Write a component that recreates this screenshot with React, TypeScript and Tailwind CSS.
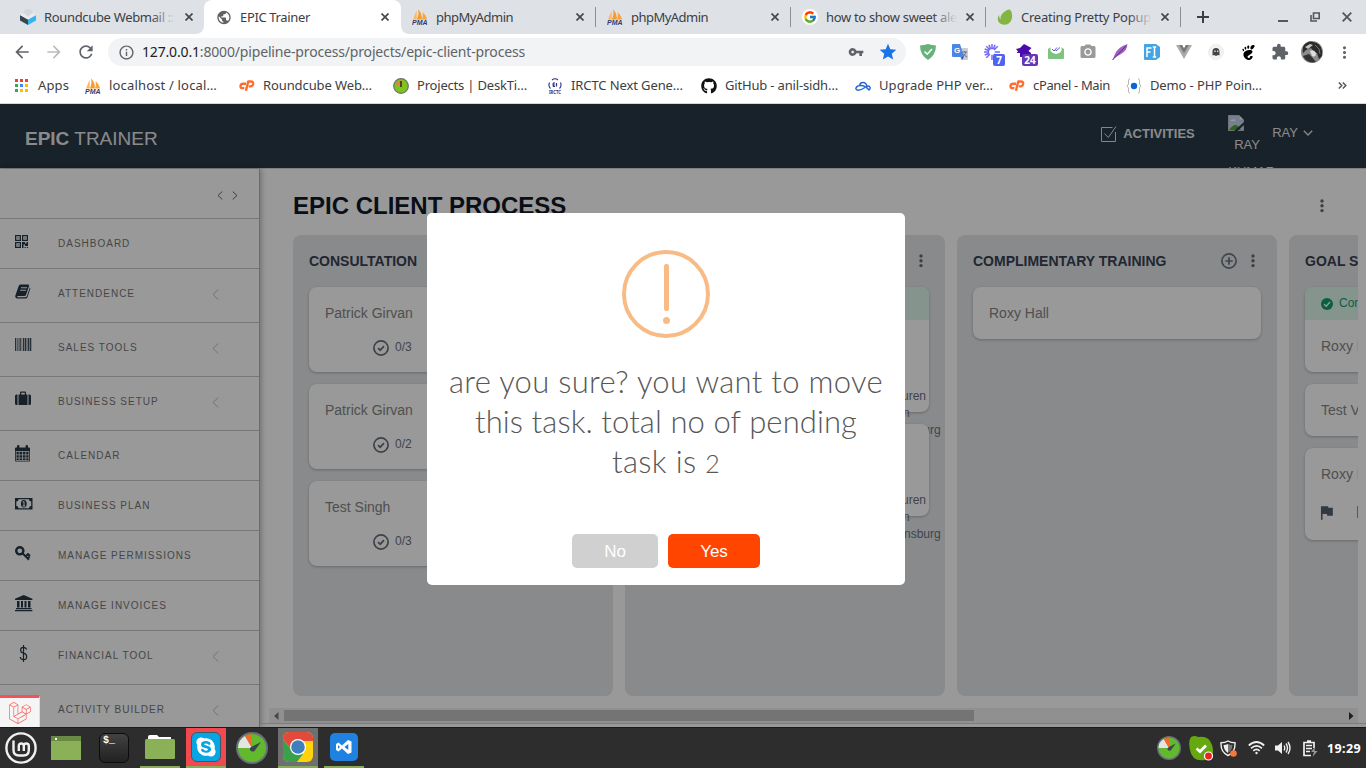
import { useLayoutEffect, useRef, type ReactNode } from 'react';
import { FaGithub, FaLaravel, FaSkype } from 'react-icons/fa';
import { FcGoogle } from 'react-icons/fc';
import { SiGnome } from 'react-icons/si';
import {
  MdArrowBack, MdArrowForward, MdRefresh, MdInfoOutline, MdVpnKey, MdStar, MdMoreVert,
  MdExtension, MdPublic, MdPhotoCamera, MdFlag,
} from 'react-icons/md';

/* Single line of text whose tracking is tuned so that it fills the given width. */
function Fit({ w, className = '', children }: { w: number; className?: string; children: ReactNode }) {
  const ref = useRef<HTMLSpanElement>(null);
  useLayoutEffect(() => {
    const el = ref.current;
    if (!el) return;
    el.style.letterSpacing = '0px';
    const n = (el.textContent || '').length;
    const natural = el.getBoundingClientRect().width;
    el.style.letterSpacing = `${(w - natural) / n}px`;
  }, [w]);
  return <span ref={ref} className={`inline-block shrink-0 whitespace-pre ${className}`}>{children}</span>;
}

function PmaIcon() {
  return (
    <svg width="16" height="16" viewBox="0 0 16 16">
      <path d="M1 10.500 L4.600 1.500 L4.800 10.500Z" fill="#fbb867" />
      <path d="M4.800 10.500 C6.500 7 7 4 6 .3 C9 3 10 7 9.800 10.500Z" fill="#f79b2c" />
      <path d="M10 10.500 C11 7 11 5 10.500 3 C13 5 14.500 8 15 10.500Z" fill="#f8a53c" />
      <text x="0" y="15.800" textLength="15.500" lengthAdjust="spacingAndGlyphs" fontSize="7" fontWeight="700" fontStyle="italic" fontFamily="Liberation Sans, sans-serif" fill="#333a75">PMA</text>
    </svg>
  );
}

function CpanelIcon() {
  return (
    <svg width="18" height="13" viewBox="0 0 18 13" fill="none" stroke="#ff6c2c" strokeWidth="2.700" strokeLinejoin="round">
      <path d="M8 4.500H4.600Q2.200 4.500 1.700 7Q1.500 9.500 4 9.500H6" />
      <path d="M7.800 12.500L10.400 2H13.400Q16.200 2 15.900 4.700Q15.400 7.500 12.800 7.500H11" />
    </svg>
  );
}

function RoundcubeIcon() {
  return (
    <svg width="16" height="16" viewBox="0 0 16 16">
      <circle cx="8" cy="5" r="5" fill="#d5d8da" />
      <path d="M0 6 L8 10.5 V16 L0 11.5Z" fill="#37474f" />
      <path d="M16 6 L8 10.5 V16 L16 11.5Z" fill="#34b5f0" />
      <path d="M0 6 L4 4 L8 8 L12 4 L16 6 L8 10.5Z" fill="#e9ebec" />
    </svg>
  );
}

function LeafIcon() {
  return (
    <svg width="16" height="16" viewBox="0 0 16 16">
      <path d="M12.500 .4C14.500 1 16 6 14.600 10.500 13 15 8 17 4 15 0 13 .2 8.500 2.200 6 C2 9 3 10 3.600 10.300 C2.500 5.500 9 .5 12.500 .4Z" fill="#82b541" />
    </svg>
  );
}

function Close() {
  return (
    <svg width="8" height="8" viewBox="0 0 8 8" stroke="#45494d" strokeWidth="1.700">
      <path d="M.5 .5 L7.500 7.500 M7.500 .5 L.5 7.500" />
    </svg>
  );
}

function TabBody({ icon, title, w, fade, fadeTo }: { icon: ReactNode; title: string; w: number; fade?: boolean; fadeTo?: string }) {
  return (
    <>
      <span className="flex w-4 shrink-0 justify-center">{icon}</span>
      <span className="relative ml-2 w-[131px] overflow-hidden text-[13px] leading-[18px] text-[#3c4043]">
        <Fit w={w}>{title}</Fit>
        {fade && <span className={`absolute inset-y-0 right-0 w-6 bg-gradient-to-r from-transparent ${fadeTo}`} />}
      </span>
      <span className="ml-auto"><Close /></span>
    </>
  );
}

function BrowserTabs() {
  const rest = [
    { icon: <PmaIcon />, title: 'phpMyAdmin', w: 77, fade: false },
    { icon: <PmaIcon />, title: 'phpMyAdmin', w: 77, fade: false },
    { icon: <span className="rounded-full bg-white p-[1px]"><FcGoogle size={14} /></span>, title: 'how to show sweet ale', w: 131, fade: true },
    { icon: <LeafIcon />, title: 'Creating Pretty Popup', w: 130, fade: true },
  ];
  return (
    <div className="flex h-[34px] shrink-0 bg-[#dee1e6]">
      <div className="w-[204px] bg-white">
        <div className="flex h-full items-center rounded-br-lg bg-[#dee1e6] pr-[11px] pl-5">
          <TabBody icon={<RoundcubeIcon />} title="Roundcube Webmail ::" w={130} fade fadeTo="to-[#dee1e6]" />
        </div>
      </div>
      <div className="flex w-[197px] items-center rounded-t-lg bg-white pr-3 pl-3">
        <TabBody icon={<MdPublic size={17} color="#5f6368" />} title="EPIC Trainer" w={70} />
      </div>
      {rest.map((t, i) => (
        <div key={i} className={`w-[195px] ${i === 0 ? 'bg-white' : ''}`}>
          <div className={`flex h-full items-center bg-[#dee1e6] pl-[11px] ${i === 0 ? 'rounded-bl-lg' : ''}`}>
            <div className="flex h-5 grow items-center border-r border-[#8b8f94] pr-[11px]">
              <TabBody {...t} fadeTo="to-[#dee1e6]" />
            </div>
          </div>
        </div>
      ))}
      <div className="flex grow items-center pl-[16px]">
        <svg width="12" height="12" stroke="#3c4043" strokeWidth="2"><path d="M6 0V12M0 6H12" /></svg>
        <div className="ml-auto flex items-center gap-[22px] pr-[14px]">
          <svg width="10" height="10" stroke="#55595d" strokeWidth="2"><path d="M0 9H10" /></svg>
          <svg width="10" height="10" fill="none" stroke="#55595d" strokeWidth="1.600"><path d="M3.500 1H9.200V6.500H3.500ZM1 3V9H7" /></svg>
          <svg width="10" height="10" stroke="#55595d" strokeWidth="1.900"><path d="M.7 .7L9.300 9.300M9.300 .7L.7 9.300" /></svg>
        </div>
      </div>
    </div>
  );
}

function Extensions() {
  const cells: ReactNode[] = [
    <svg key="a" width="16" height="16" viewBox="0 0 16 16"><path d="M0 1.500Q4 1.300 8 0Q12 1.300 16 1.500Q16 11 8 16Q0 11 0 1.500Z" fill="#67b279" /><path d="M4.500 7.500L7.200 10.200L12 5" fill="none" stroke="#fff" strokeWidth="1.600" /></svg>,
    <svg key="b" width="16" height="16" viewBox="0 0 16 16"><path d="M6 4H15Q16 4 16 5V15Q16 16 15 16H9Z" fill="#c9ced6" /><path d="M1 0H8L12 13H1Q0 13 0 12V1Q0 0 1 0Z" fill="#4a86e8" /><path d="M9 13H12L10 16Z" fill="#2a56c6" /><text x="2" y="9" fontSize="8" fontWeight="700" fontFamily="Liberation Sans, sans-serif" fill="#fff">G</text><path d="M10 8H15M12.500 7V8M14 8Q13 11 10.500 13M11 9.500Q13 12 15 13" stroke="#5f6f86" fill="none" /></svg>,
    <span key="c" className="relative">
      <svg width="16" height="16" viewBox="0 0 16 16" stroke="#7168f4" strokeWidth="1.500"><path d="M8 0V5.500M8 10.500V16M0 8H5.500M10.500 8H16M2.300 2.300L6 6M10 10L13.700 13.700M13.700 2.300L10 6M6 10L2.300 13.700M5 .7L6.700 5.300M11 .7L9.300 5.300M.7 5L5.300 6.700M.7 11L5.300 9.300" /><circle cx="8" cy="8" r="2.600" fill="#fff" stroke="none" /></svg>
      <b className="absolute top-[10px] left-[9px] h-3 w-3 rounded-[2px] bg-[#4f63f0] text-center text-[10px] leading-3 text-white">7</b>
    </span>,
    <span key="d" className="relative">
      <svg width="16" height="16" viewBox="0 0 16 16" fill="#4b0bab"><path d="M8 0L15.500 4L12.500 7L15 9V13H4V9H.5L2 7.500L0 5L4 4Z" /></svg>
      <b className="absolute top-[10px] left-[6px] h-3 w-4 rounded-[2px] bg-[#6637b8] text-center text-[10px] leading-3 text-white">24</b>
    </span>,
    <svg key="e" width="16" height="16" viewBox="0 0 16 16"><path d="M0 5L3 3V1H13V3L16 5V14Q16 15 15 15H1Q0 15 0 14Z" fill="#7cc47f" /><path d="M2.500 1H13.500V7Q11 10 8 10Q5 10 2.500 7Z" fill="#fff" /><path d="M4 5L6 7L9 3.500M7.500 6.500L8 7L12 3.500" fill="none" stroke="#5963b5" /></svg>,
    <MdPhotoCamera key="f" size={18} color="#9a9a9a" />,
    <svg key="g" width="16" height="16" viewBox="0 0 16 16"><path d="M15.500 0Q15 7 9 10L3 13.500L.5 16L3 10Q6 3 15.500 0Z" fill="#a05fc0" /><path d="M.5 16L14 2" stroke="#5e2d7c" /></svg>,
    <svg key="h" width="16" height="16" viewBox="0 0 16 16"><path d="M1 0H12L16 3V13L12 16H1Q0 16 0 15V1Q0 0 1 0Z" fill="#43a5e3" /><path d="M3 13V4H7.500M3 8H6.500M10.500 3.500V12.500M8.800 3H12.200M8.800 13H12.200" fill="none" stroke="#fff" strokeWidth="1.500" /></svg>,
    <svg key="i" width="16" height="14" viewBox="0 0 16 14"><path d="M0 0H6L8 3.500L10 0H16L8 14Z" fill="#aaa" /><path d="M3.200 0H6L8 3.500L10 0H12.800L8 8.300Z" fill="#777" /></svg>,
    <svg key="j" width="16" height="16" viewBox="0 0 16 16"><circle cx="8" cy="8" r="7.500" fill="#f2f2f2" stroke="#e2e2e2" strokeWidth=".6" /><path d="M4.500 11.500V7.500Q4.500 4 8 4Q11.500 4 11.500 7.500V11.500L10 11L8 12L6 11Z" fill="#444" /><path d="M7 6.500V8M9.800 6.500V8" stroke="#fff" strokeWidth="1.100" /></svg>,
    <SiGnome key="k" size={15} color="#000" />,
    <MdExtension key="l" size={18} color="#5f6368" />,
    <svg key="m" width="22" height="22" viewBox="0 0 22 22"><circle cx="11" cy="11" r="11" fill="#8c8c8c" /><path d="M3 4Q8 -1 12 1Q20 2 21 10L21 15L18 18L16 12L13 11L10 7L5 9L2 12Q1 7 3 4Z" fill="#2b2b2b" /><path d="M2 15L8 13L10 15L15 21Q6 23 2 15Z" fill="#333" /><path d="M9 10Q13 8 15 12Q15 17 11 15Z" fill="#dedede" /><path d="M4 6L9 3L12 4L7 8Z" fill="#c4c4c4" /><path d="M14 4L18 8L19 13" fill="none" stroke="#777" /></svg>,
    <MdMoreVert key="n" size={19} color="#5f6368" />,
  ];
  return (
    <div className="ml-[7px] flex items-center">
      {cells.map((c, i) => <span key={i} className="flex w-8 justify-center">{c}</span>)}
    </div>
  );
}

function Toolbar() {
  return (
    <div className="flex h-9 shrink-0 items-center pl-[6px]">
      <span className="flex w-8 justify-center"><MdArrowBack size={20} color="#5f6368" /></span>
      <span className="flex w-8 justify-center"><MdArrowForward size={20} color="#babcbe" /></span>
      <span className="flex w-8 justify-center"><MdRefresh size={20} color="#5f6368" /></span>
      <div className="ml-[6px] flex h-7 w-[798px] items-center rounded-full bg-[#f1f3f4] pl-[10px] pr-[8px] text-[14px] text-[#5f6368]">
        <MdInfoOutline size={17} color="#5f6368" />
        <Fit w={383} className="mb-[2px] ml-[7px]"><span className="text-[#202124]">127.0.0.1</span>:8000/pipeline-process/projects/epic-client-process</Fit>
        <MdVpnKey size={16} color="#5f6368" className="ml-auto" />
        <MdStar size={20} color="#1a73e8" className="ml-[14px]" />
      </div>
      <div className="-ml-px"><Extensions /></div>
    </div>
  );
}

function CloudIcon() {
  return <svg width="16" height="16" viewBox="0 0 16 16" fill="none" stroke="#2367d1" strokeWidth="1.400"><path d="M.8 11Q1 8 5 7.500Q10 7 14 12Q16 10 14.500 8.500Q13.500 7.500 12 8.500Q11 4 7.500 4.500Q5 4.800 4.500 7.500M.8 11Q3 14 10 9.500" /></svg>;
}

function Bookmarks() {
  const dots = ['#ea4335', '#ea4335', '#ea4335', '#34a853', '#4285f4', '#fbbc05', '#34a853', '#fbbc05', '#fbbc05'];
  const items: { icon: ReactNode; label: string; w: number; cell: string }[] = [
    { icon: <PmaIcon />, label: 'localhost / local…', w: 108, cell: 'w-[154px]' },
    { icon: <CpanelIcon />, label: 'Roundcube Web…', w: 109, cell: 'w-[154px]' },
    {
      icon: <svg width="16" height="16" viewBox="0 0 16 16"><circle cx="8" cy="8" r="7.300" fill="#7fc31c" stroke="#667568" strokeWidth="1.200" /><path d="M8 8V2.500Q4 2.500 3 6Z" fill="#f2784b" /><path d="M7.300 3H8.700V9H7.300Z" fill="#222" /></svg>,
      label: 'Projects | DeskTi…', w: 110, cell: 'w-[154px]',
    },
    {
      icon: <svg width="16" height="16" viewBox="0 0 16 16" fill="none" stroke="#2c2f8f"><path d="M5 2Q8 -.5 11 2M2.500 4.500Q1 8 3.500 10.500M13.500 4.500Q15 8 12.500 10.500" strokeWidth="1.100" /><path d="M6.200 5V8.500M9.500 5V8.500M6 5H8M6 7H8M6 8.500H8" strokeWidth="1.200" /><text x="2" y="15.800" fontSize="4.500" stroke="none" fill="#2c2f8f" fontWeight="700" textLength="12" lengthAdjust="spacingAndGlyphs">IRCTC</text></svg>,
      label: 'IRCTC Next Gene…', w: 112, cell: 'w-[154px]',
    },
    { icon: <FaGithub size={16} color="#111" />, label: 'GitHub - anil-sidh…', w: 113, cell: 'w-[154px]' },
    { icon: <CloudIcon />, label: 'Upgrade PHP ver…', w: 114, cell: 'w-[154px]' },
    { icon: <CpanelIcon />, label: 'cPanel - Main', w: 77, cell: 'w-[117px]' },
    {
      icon: <svg width="16" height="16" viewBox="0 0 16 16" fill="none" stroke="#b5b8bb"><path d="M4 .7Q2.500 .7 2.500 3V6L1 8L2.500 10V13Q2.500 15.300 4 15.300M12 .7Q13.500 .7 13.500 3V6L15 8L13.500 10V13Q13.500 15.300 12 15.300" /><circle cx="8" cy="8" r="3.200" fill="#0b65d8" stroke="none" /></svg>,
      label: 'Demo - PHP Poin…', w: 112, cell: 'w-[150px]',
    },
  ];
  return (
    <div className="flex h-[34px] shrink-0 items-center border-b border-[#d5d7da] pb-[2px] pl-[15px] text-[13px] text-[#3c4043]">
      <div className="flex w-[70px] items-center gap-[10px]">
        <span className="grid grid-cols-3 gap-[2px]">
          {dots.map((c, i) => <i key={i} className="h-[3px] w-[3px]" style={{ background: c }} />)}
        </span>
        <Fit w={31} className="pt-px">Apps</Fit>
      </div>
      {items.map((b, i) => (
        <div key={i} className={`flex shrink-0 items-center gap-2 ${b.cell}`}>
          <span className="flex w-4 shrink-0 justify-center">{b.icon}</span>
          <Fit w={b.w} className="pt-px">{b.label}</Fit>
        </div>
      ))}
      <svg className="mr-[19px] ml-auto" width="9" height="7" fill="none" stroke="#55595d" strokeWidth="1.500"><path d="M.8 .5L3.800 3.500L.8 6.500M4.800 .5L7.800 3.500L4.800 6.500" /></svg>
    </div>
  );
}

/* ---------- application ---------- */

function AppHeader() {
  return (
    <header className="flex h-[65px] shrink-0 items-start overflow-hidden border-b border-[#d8d8d8] bg-[#283946] text-[13px] text-[#e6e6e6]">
      <div className="mt-[23px] ml-[25px] text-[19px] leading-6"><b>EPIC</b> TRAINER</div>
      <div className="mt-[22px] ml-auto flex h-4 w-[127px] items-center">
        <svg width="16" height="16" viewBox="0 0 16 16" fill="none" stroke="#e0e0e0"><path d="M11.500 1.500H.5V15.500H14.500V6M3.500 7.500L7.300 11.500L15 .5" /></svg>
        <b className="ml-[6px]">ACTIVITIES</b>
      </div>
      <div className="mt-[11px] w-[44px] text-[13px]">
        <svg width="16" height="16" viewBox="0 0 16 16"><path d="M.5 .5H11L15.500 5V15.500H.5Z" fill="#c6d5f5" stroke="#c0c0c0" /><path d="M11 .5V5H15.500" fill="#fff" stroke="#c0c0c0" /><path d="M1 15Q6 8 10 11L13 15Z" fill="#4aa832" /><path d="M2.500 6Q3 4 5 4.500Q7 3.500 7.500 6Z" fill="#fff" /><path d="M6 16L16 7V10L9.500 16Z" fill="#283946" /></svg>
        <div className="ml-[6px] h-[33px] leading-[27px]">RAY</div>
        <div className="leading-[15px] whitespace-nowrap">KUMAR</div>
      </div>
      <div className="mt-5 mr-[53px] flex h-[18px] items-center gap-[5px]">
        RAY
        <svg width="10" height="6" fill="none" stroke="#e0e0e0" strokeWidth="1.400"><path d="M.8 .8L5 5L9.200 .8" /></svg>
      </div>
    </header>
  );
}

const NAVY = '#263846';
const sideIcons: Record<string, ReactNode> = {
  DASHBOARD: <svg width="14" height="14" viewBox="0 0 14 14" fill={NAVY} fillRule="evenodd"><path d="M0 0H6V6H0ZM1.300 1.300V4.700H4.700V1.300ZM2.400 2.400H3.600V3.600H2.400ZM7 0H13V6H7ZM8.300 1.300V4.700H11.700V1.300ZM9.400 2.400H10.600V3.600H9.400ZM0 7H6V13H0ZM1.300 8.300V11.700H4.700V8.300ZM2.400 9.400H3.600V10.600H2.400ZM7 7H10V8.500H11.500V7H13V11H10V9.500H8.500V13H7ZM9.500 12H10.700V13H9.500ZM11.800 12H13V13H11.800Z" /></svg>,
  ATTENDENCE: <svg width="16" height="15" viewBox="0 0 16 15"><path d="M5.500 .5H13Q14.500 .5 14 2L11 11Q10.600 12 9.500 12H2.500Q1.800 12.500 2.500 13.200H10Q11.500 13.200 12 12L14.800 3.500Q15.500 4 15.200 5L12.600 13Q12 14.500 10.500 14.500H2Q-.3 14 .4 11.500L3.500 2.500Q4 .5 5.500 .5Z" fill={NAVY} /><path d="M6 3.800H12M5.200 6.300H11" stroke="#fff" strokeWidth="1.100" /></svg>,
  'SALES TOOLS': <svg width="17" height="14" viewBox="0 0 17 14" fill="#43515c"><path d="M0 0H1.300V13H0ZM2 0H2.600V13H2ZM3.600 0H4.500V13H3.600ZM5.200 0H6V13H5.200ZM6.700 0H7.200V13H6.700ZM8 0H9.200V13H8ZM9.800 0H11V13H9.800ZM11.600 0H12.200V13H11.600ZM12.800 0H14V13H12.800ZM14.600 0H16.300V13H14.600Z" /></svg>,
  'BUSINESS SETUP': <svg width="17" height="15" viewBox="0 0 17 15" fill={NAVY} fillRule="evenodd"><path d="M3.500 3.500V14H12.500V3.500H11V1.500Q11 .5 10 .5H6Q5 .5 5 1.500V3.500ZM6.200 1.700H9.800V3.500H6.200ZM0 5Q0 3.500 1.500 3.500H2.500V14H1.500Q0 14 0 12.500ZM13.500 3.500H14.500Q16 3.500 16 5V12.500Q16 14 14.500 14H13.500Z" /></svg>,
  CALENDAR: <svg width="16" height="17" viewBox="0 0 16 17"><path d="M1 2.500H14Q15 2.500 15 3.500V15.500Q15 16.500 14 16.500H1Q0 16.500 0 15.500V3.500Q0 2.500 1 2.500ZM2 1Q2 0 3.200 0T4.400 1V4H2ZM10.600 1Q10.600 0 11.800 0T13 1V4H10.600Z" fill={NAVY} /><path d="M1 6.500H14M1 9.800H14M1 13H14M4.200 6V15.500M7.500 6V15.500M10.800 6V15.500M1.200 6V15.500H13.800V6" fill="none" stroke="#fff" strokeWidth=".7" /></svg>,
  'BUSINESS PLAN': <svg width="18" height="12" viewBox="0 0 18 12"><path d="M0 0H17.500V11.500H0Z" fill={NAVY} /><path d="M3.500 1.300H14Q14 3.500 16.200 3.500V8Q14 8 14 10.200H3.500Q3.500 8 1.300 8V3.500Q3.500 3.500 3.500 1.300Z" fill="#fff" /><ellipse cx="8.800" cy="5.800" rx="2.900" ry="3.800" fill={NAVY} /><path d="M7.800 4.200L9 3.500V8M7.500 8H10.300" stroke="#fff" fill="none" /></svg>,
  'MANAGE PERMISSIONS': <svg width="16" height="15" viewBox="0 0 16 15" fill="none" stroke={NAVY}><circle cx="4.800" cy="4.800" r="3.600" strokeWidth="2.400" /><path d="M7.500 7.300L14 13.700M10.500 10.500L13 8L15 10M13 12L14.800 10.500" strokeWidth="1.900" /></svg>,
  'MANAGE INVOICES': <svg width="18" height="17" viewBox="0 0 18 17" fill={NAVY}><path d="M8.700 0L17.400 3.700V5H0V3.700ZM2 6H4.500V12.500H2ZM6 6H8V12.500H6ZM9.500 6H11.500V12.500H9.500ZM13 6H15.500V12.500H13ZM1 13H16.500V14.200H1ZM0 15H17.400V16.300H0Z" /></svg>,
  'FINANCIAL TOOL': <svg width="18" height="17" viewBox="0 0 18 17" fill="none" stroke={NAVY} strokeWidth="1.200"><path d="M8.500 0V17M11.500 4.500Q11 2.300 8.500 2.300Q5.600 2.300 5.600 5Q5.600 7.500 8.500 8.200Q11.700 9 11.700 11.700Q11.700 14.700 8.500 14.700Q5.700 14.700 5.300 12" /></svg>,
};

function Sidebar() {
  const rows: { label: string; sub: boolean }[] = [
    { label: 'DASHBOARD', sub: false }, { label: 'ATTENDENCE', sub: true }, { label: 'SALES TOOLS', sub: true },
    { label: 'BUSINESS SETUP', sub: true }, { label: 'CALENDAR', sub: false }, { label: 'BUSINESS PLAN', sub: false },
    { label: 'MANAGE PERMISSIONS', sub: false }, { label: 'MANAGE INVOICES', sub: false },
    { label: 'FINANCIAL TOOL', sub: true }, { label: 'ACTIVITY BUILDER', sub: true },
  ];
  return (
    <aside className="h-full w-[260px] shrink-0 overflow-hidden border-r border-[#b5b5b5] bg-white shadow-[1px_0_6px_rgba(0,0,0,0.3)]">
      <div className="flex h-[50px] items-center justify-end gap-[9px] border-b border-[#c6c6c6] pt-[3px] pr-[21px]">
        <svg width="6" height="9" fill="none" stroke="#666" strokeWidth="1"><path d="M5.300 .5L1 4.500L5.300 8.500" /></svg>
        <svg width="6" height="9" fill="none" stroke="#666" strokeWidth="1"><path d="M.7 .5L5 4.500L.7 8.500" /></svg>
      </div>
      {rows.map((r) => (
        <div key={r.label} className={`flex items-start border-b border-[#c6c6c6] pl-[15px] ${r.sub ? 'h-[54px]' : 'h-[50px]'}`}>
          <span className={`flex w-[43px] items-center ${r.label === 'BUSINESS SETUP' || r.label === 'SALES TOOLS' ? 'h-[43px]' : 'h-[45px]'}`}>{sideIcons[r.label]}</span>
          <span className="text-[10px] leading-[49px] tracking-[1px] text-[#767676]">{r.label}</span>
          {r.sub && (
            <svg className="mt-5 mr-[40px] ml-auto" width="7" height="11" fill="none" stroke="#bdbdbd" strokeWidth="1"><path d="M6.300 .5L1 5.500L6.300 10.500" /></svg>
          )}
        </div>
      ))}
    </aside>
  );
}

function Dots() {
  return <svg width="4" height="14" fill="#666b77"><circle cx="2" cy="2" r="1.700" /><circle cx="2" cy="6.800" r="1.700" /><circle cx="2" cy="11.600" r="1.700" /></svg>;
}

function Column({ title, children, add }: { title: string; children: ReactNode; add?: boolean }) {
  return (
    <section className="h-[461px] w-80 shrink-0 rounded-lg bg-[#e5e7e9] px-4 pt-4">
      <div className="mb-4 flex h-5 items-center">
        <h2 className="text-[14px] leading-5 font-bold whitespace-nowrap text-[#374151]">{title}</h2>
        {add && <svg className="ml-auto" width="16" height="16" fill="none" stroke="#6b7280" strokeWidth="1.700"><circle cx="8" cy="8" r="7.100" /><path d="M8 4.300V11.700M4.300 8H11.700" /></svg>}
        <span className={`mr-[6px] ${add ? 'ml-[14px]' : 'ml-auto'}`}><Dots /></span>
      </div>
      <div className="flex flex-col gap-3">{children}</div>
    </section>
  );
}

function Card({ name, count, children, green, h = '' }: { name?: string; count?: string; children?: ReactNode; green?: string; h?: string }) {
  return (
    <article className={`relative rounded-lg bg-white shadow-[0_1px_3px_rgba(0,0,0,0.25)] ${h}`}>
      {green !== undefined && (
        <div className="flex h-[33px] items-center gap-[6px] rounded-t-lg bg-[#def7ec] px-4 text-[12px] text-[#0e9f6e]">
          <svg width="12" height="12" className="mt-px"><circle cx="6" cy="6" r="6" fill="#0e9f6e" /><path d="M3 6.200L5.200 8.300L9 4" fill="none" stroke="#fff" strokeWidth="1.400" /></svg>
          <span className="pb-px">{green}</span>
        </div>
      )}
      <div className={green !== undefined ? 'px-4 pt-4 pb-4' : 'p-4'}>
        <div className="h-5 text-[14px] leading-5 text-[#858585]">{name}</div>
        {count && (
          <div className="mt-[17px] flex h-4 items-center pl-12 text-[12px] leading-4 text-[#6b7280]">
            <svg width="16" height="16" fill="none" stroke="#666d78" strokeWidth="1.700"><circle cx="8" cy="8" r="7.100" /><path d="M5 8.200L7.200 10.200L11 6.200" /></svg>
            <span className="ml-[6px] pb-[2px]">{count}</span>
          </div>
        )}
        {children}
      </div>
    </article>
  );
}

function Note({ top }: { top: string }) {
  return (
    <p className={`absolute left-[263px] w-10 text-[12px] leading-[17px] text-[#6b7280] ${top}`}><span className="-ml-[2px]">uren</span><br /><span className="-ml-px">n</span><br />nsburg</p>
  );
}

function Board() {
  return (
    <main className="flex min-w-0 grow flex-col pt-[21px] pr-2">
      <div className="flex h-8 shrink-0 items-center pr-[34px] pl-[33px]">
        <h1 className="text-[24px] leading-8 font-bold text-[#111827]">EPIC CLIENT PROCESS</h1>
        <span className="ml-auto"><Dots /></span>
      </div>
      <div className="mt-[13px] flex h-[461px] shrink-0 gap-3 overflow-hidden pl-[33px]">
        <Column title="CONSULTATION" add>
          <Card name="Patrick Girvan" count="0/3" />
          <Card name="Patrick Girvan" count="0/2" />
          <Card name="Test Singh" count="0/3" />
        </Column>
        <Column title="" add>
          <Card green="" h="h-[125px]"><Note top="top-[101px]" /></Card>
          <Card h="h-[92px]"><Note top="top-[68px]" /></Card>
        </Column>
        <Column title="COMPLIMENTARY TRAINING" add>
          <Card name="Roxy Hall" />
        </Column>
        <Column title="GOAL SETTING">
          <Card green="Completed" name="Roxy Hall" />
          <Card name="Test V" />
          <Card name="Roxy Hall" h="h-[92px]">
            <div className="mt-5 flex h-4 items-center gap-[21px] text-[#56606e]"><MdFlag size={19} className="-ml-[4px]" /><span className="h-3 w-3 bg-[#8d929a]" /></div>
          </Card>
        </Column>
      </div>
      <div className="mt-3 ml-[9px] flex h-[15px] shrink-0 items-center bg-[#f1f1f1]">
        <svg width="15" height="8" fill="#777"><path d="M9.500 0V8L5 4Z" /></svg>
        <div className="h-[11px] w-[690px] bg-[#c1c1c1]" />
        <svg className="mr-[4px] ml-auto" width="5" height="8" fill="#333"><path d="M0 0V8L4.500 4Z" /></svg>
      </div>
      <div className="-mr-2 h-px shrink-0 bg-[#d0d0d0]" />
    </main>
  );
}

function Alert() {
  return (
    <div className="absolute top-[109px] left-[427px] flex h-[372px] w-[478px] flex-col items-center rounded-[5px] bg-white pt-[37px]">
      <svg width="88" height="88" fill="#f8bb86"><circle cx="44" cy="44" r="42" fill="none" stroke="#f8bb86" strokeWidth="4" /><rect x="42" y="14" width="5" height="47" rx="2" /><circle cx="44.500" cy="70.500" r="3.500" /></svg>
      <h2 className="mt-[23px] flex flex-col items-center font-['Lato'] text-[31px] leading-10 font-light text-[#575757]">
        <Fit w={434}>are you sure? you want to move</Fit>
        <Fit w={382}>this task. total no of pending</Fit>
        <Fit w={108}>task is <span className="text-[25px]">2</span></Fit>
      </h2>
      <div className="mt-[51px] flex gap-[10px] text-[17px] leading-[33px] text-white">
        <button className="h-[34px] w-[86px] rounded-[5px] bg-[#d0d0d0]">No</button>
        <button className="h-[34px] w-[92px] rounded-[5px] bg-[#ff4500]">Yes</button>
      </div>
    </div>
  );
}

/* ---------- desktop panel ---------- */

function Gauge({ size }: { size: number }) {
  return (
    <svg width={size} height={size} viewBox="0 0 32 32"><circle cx="16" cy="16" r="15" fill="#62b92e" stroke="#697078" strokeWidth="2" /><path d="M16 16H2A14 14 0 0 1 9 4Z" fill="#e4e4e4" /><path d="M16 16L9 4A14 14 0 0 1 16 2Z" fill="#f3692b" /><path d="M25 10L18.500 19Q16 20.500 14 18Q13.500 15.500 16 14.500Z" fill="#37474f" /></svg>
  );
}

function Taskbar() {
  return (
    <footer className="flex h-[41px] shrink-0 items-center border-t border-[#1b1b1b] bg-[#2d2d2d]">
      <span className="flex w-[42px] justify-center">
        <svg width="32" height="32" viewBox="0 0 32 32" fill="none" stroke="#f0f0f0"><circle cx="16" cy="16" r="14.600" strokeWidth="2.400" /><path d="M8.500 8.500V18Q8.500 23.500 14 23.500H18.500Q23.800 23.500 23.800 18V14Q23.800 11.500 21.300 11.500T18.800 14V19M18.800 14Q18.800 11.500 16.300 11.500T13.800 14V19" strokeWidth="2.400" /></svg>
      </span>
      <span className="ml-[4px] flex h-full w-10 items-center justify-center">
        <svg width="30" height="24"><path d="M0 0H30V24H0Z" fill="#8bb158" /><path d="M0 0H30V5H0Z" fill="#688a43" /><rect x="4" y="2" width="2" height="2" fill="#fff" /></svg>
      </span>
      <span className="ml-2 flex h-full w-10 items-center justify-center">
        <span className="h-[30px] w-[30px] rounded-[6px] border border-[#0c0c0c] bg-gradient-to-b from-[#424242] to-[#222] pl-[3px] font-['Liberation_Mono'] text-[10px] leading-[13px] font-bold text-white">$_</span>
      </span>
      <span className="ml-[6px] flex h-full w-10 items-center justify-center border-b-2 border-[#87ab57]">
        <svg width="30" height="26"><path d="M3 7V3Q3 1 5 1H12L14 3H26V7Z" fill="#fff" /><rect y="5" width="30" height="20" rx="1.500" fill="#8bb158" /></svg>
      </span>
      <span className="ml-[6px] flex h-full w-10 items-center justify-center border-b-2 border-[#87ab57] bg-[#f04a50]">
        <span className="flex h-[30px] w-[30px] items-center justify-center rounded-[6px] border border-[#365b6b] bg-[#08a5e3]"><FaSkype size={22} color="#fff" /></span>
      </span>
      <span className="ml-[6px] flex h-full w-10 items-center justify-center"><Gauge size={32} /></span>
      <span className="ml-[6px] flex h-full w-10 items-center justify-center border-b-2 border-[#87ab57] bg-[#6f6f6f]">
        <svg width="30" height="30" viewBox="0 0 30 30">
          <defs><clipPath id="tile"><rect width="30" height="30" rx="6" /></clipPath></defs>
          <g clipPath="url(#tile)">
            <path d="M0 0H30V30H0Z" fill="#ffd20a" /><path d="M0 0H30V9H15L8 17L0 7Z" fill="#e24b3c" /><path d="M0 7L8.500 18L20 22L14 30H0Z" fill="#3ba04c" />
          </g>
          <circle cx="15" cy="15" r="8" fill="#fff" /><circle cx="15" cy="15" r="6.800" fill="#3f7fbd" />
        </svg>
      </span>
      <span className="ml-[6px] flex h-full w-10 items-center justify-center border-b-2 border-[#87ab57]">
        <svg width="28" height="28"><rect width="28" height="28" rx="5" fill="#1f82e0" /><path d="M18 7L21.500 8.500V19.500L18 21L12 15.500L8.500 18.500L6 17V11L8.500 9.500L12 12.500Z" fill="#fff" /><path d="M18.300 11L14.500 14L18.300 17ZM8 12.300V15.700L10 14Z" fill="#1f78d4" /></svg>
      </span>
      <div className="mr-[5px] ml-auto flex items-center">
        <Gauge size={24} />
        <svg className="ml-[8px]" width="25" height="25" viewBox="0 0 25 25"><path d="M2 1Q6 -1 9 1Q20 -1 23 9Q27 22 16 24Q3 26 1 14Q-1 5 2 1Z" fill="#65a80f" /><path d="M7.500 12.500L11 15.500L17 9.500" fill="none" stroke="#fff" strokeWidth="2.800" /><circle cx="19.500" cy="20" r="4" fill="#ef2020" stroke="#fff" strokeWidth="1.200" /></svg>
        <svg className="ml-[6px]" width="17" height="17" viewBox="0 0 17 17"><path d="M8 1Q11 2.800 15 2.800Q15.500 12 8 15.500Q.5 12 1 2.800Q5 2.800 8 1Z" fill="none" stroke="#eee" strokeWidth="1.400" /><path d="M8 4Q10 5 12.500 5Q12 10.500 8 13Z" fill="#777" /><path d="M8 4Q6 5 3.500 5Q4 10.500 8 13Z" fill="#eee" /><circle cx="13.500" cy="13.500" r="3.300" fill="#f0783c" /></svg>
        <svg className="ml-[11px]" width="17" height="14" viewBox="0 0 17 14" fill="none" stroke="#f0f0f0" strokeWidth="1.700"><path d="M.8 4.500Q8.500 -2.500 16.200 4.500M3 7.300Q8.500 2.300 14 7.300M5.300 9.900Q8.500 7 11.700 9.900" /><circle cx="8.500" cy="12" r="1.200" fill="#f0f0f0" stroke="none" /></svg>
        <svg className="ml-[10px]" width="16" height="14" viewBox="0 0 16 14" fill="none" stroke="#f0f0f0" strokeWidth="1.400"><path d="M0 4.500H3L7 1V13L3 9.500H0Z" fill="#f0f0f0" stroke="none" /><path d="M9 4.500Q10.500 7 9 9.500M11 2.500Q14 7 11 11.500M13 1Q17 7 13 13" /></svg>
        <svg className="ml-[12px]" width="15" height="17" viewBox="0 0 15 17" fill="none" stroke="#f0f0f0" strokeWidth="1.700"><path d="M8 15.500H1V2.500H11V8M4 1H8M3 5.500H9M3 8.500H9M3 11.500H7" /><path d="M12 7L8 12H11L9.500 17L14.500 11H11.500Z" fill="#999" stroke="none" /></svg>
        <Fit w={34} className="ml-[9px] pt-px text-[12.5px] leading-4 font-bold text-white">19:29</Fit>
      </div>
    </footer>
  );
}

export default function App() {
  return (
    <div className="flex h-[768px] w-[1366px] flex-col overflow-hidden bg-white font-['Noto_Sans',sans-serif]">
      <BrowserTabs />
      <Toolbar />
      <Bookmarks />
      <div className="relative flex h-[623px] shrink-0 flex-col overflow-hidden bg-white font-['Liberation_Sans',Arial,sans-serif]">
        <AppHeader />
        <div className="flex h-[558px] shrink-0">
          <Sidebar />
          <Board />
        </div>
        <div className="absolute inset-0 bg-black/40" />
        <Alert />
        <div className="absolute bottom-0 left-0 flex h-8 w-10 items-center justify-center border-t-[3px] border-r border-t-[#f4525b] border-r-[#ddd] bg-[#f5f5f5]">
          <FaLaravel size={22} color="#f4645f" />
        </div>
      </div>
      <Taskbar />
    </div>
  );
}
